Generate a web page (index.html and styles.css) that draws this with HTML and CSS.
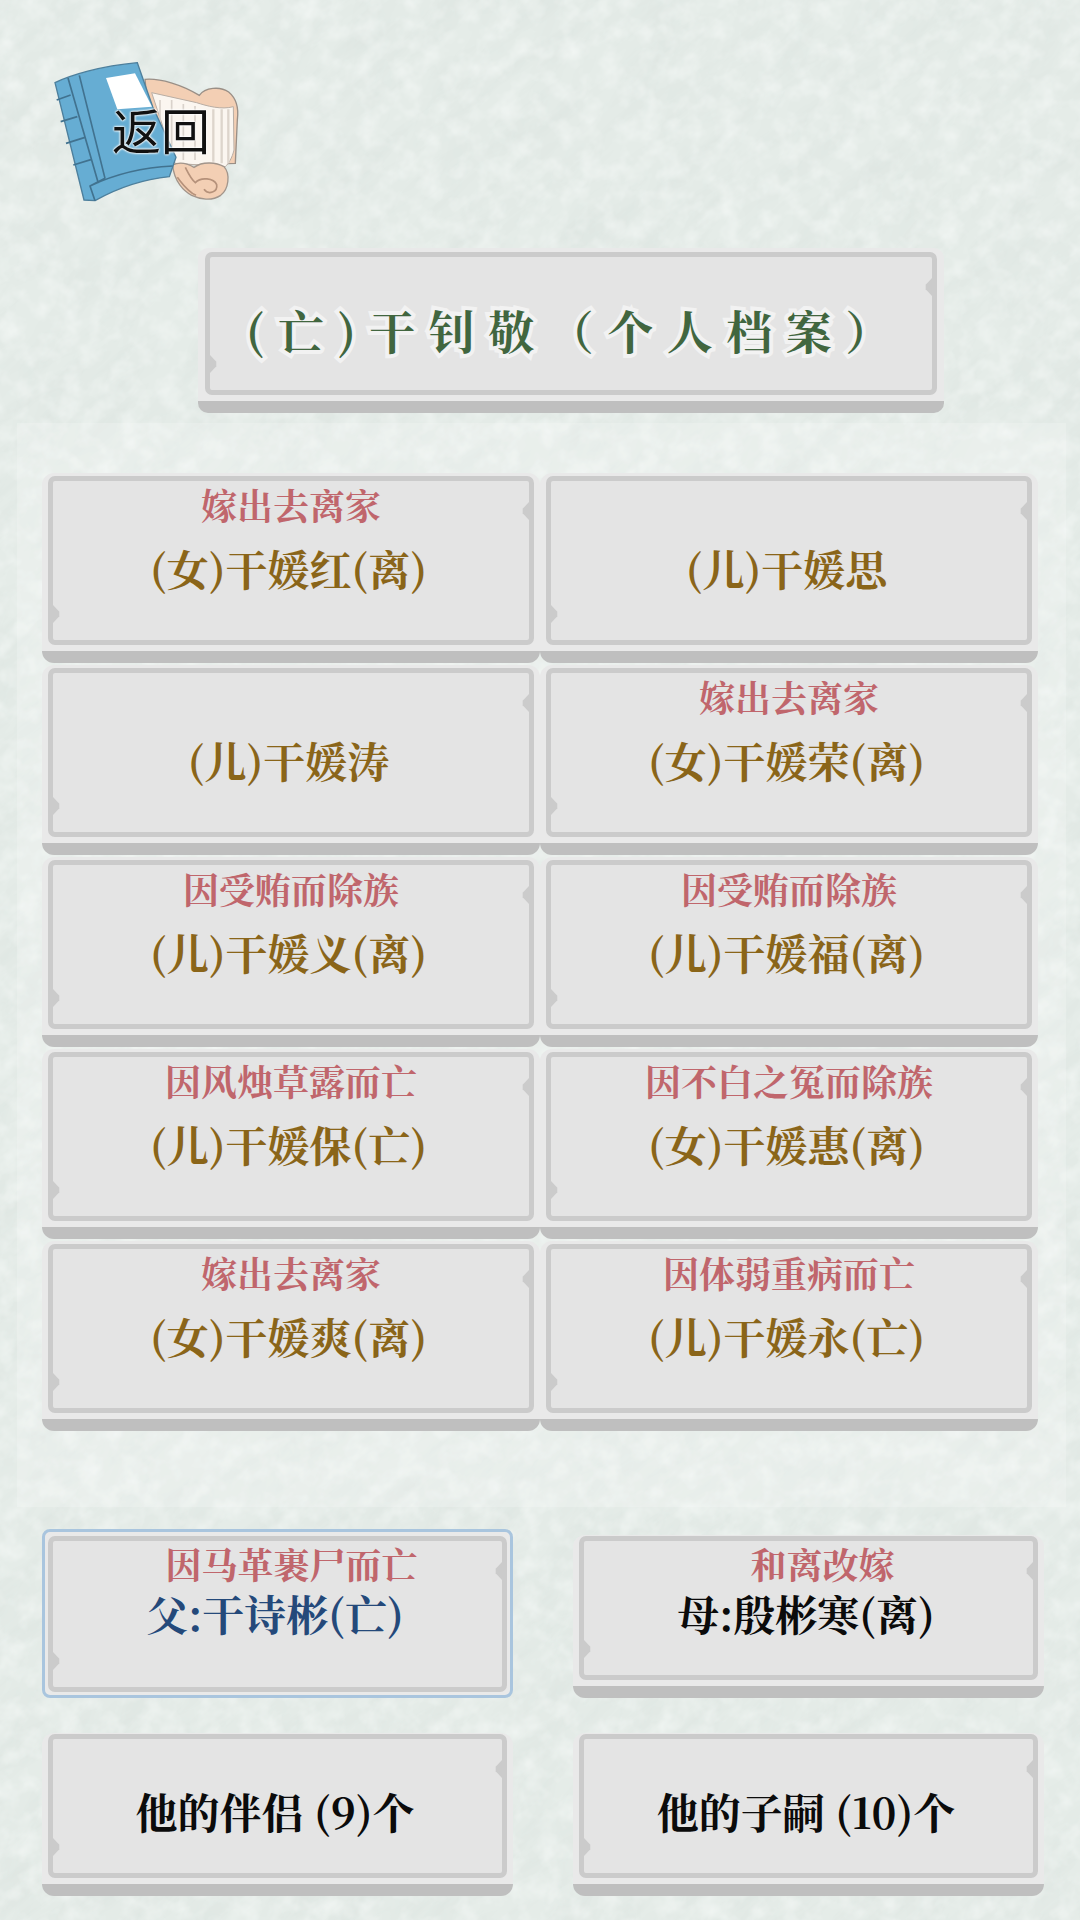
FILE: index.html
```html
<!DOCTYPE html>
<html lang="zh-CN">
<head>
<meta charset="utf-8">
<title>个人档案</title>
<link rel="stylesheet" href="styles.css">
</head>
<body>
<svg class="paper" width="1080" height="1920" aria-hidden="true">
  <defs>
    <filter id="blotch" x="0" y="0" width="100%" height="100%">
      <feTurbulence type="fractalNoise" baseFrequency="0.035 0.012" numOctaves="5" seed="11"/>
      <feColorMatrix type="matrix" values="0 0 0 0 0.72  0 0 0 0 0.78  0 0 0 0 0.75  0.9 0 0 0 -0.36"/>
    </filter>
    <filter id="fiber" x="0" y="0" width="100%" height="100%">
      <feTurbulence type="fractalNoise" baseFrequency="0.012 0.06" numOctaves="4" seed="7"/>
      <feColorMatrix type="matrix" values="0 0 0 0 0.70  0 0 0 0 0.76  0 0 0 0 0.73  0 0.9 0 0 -0.38"/>
    </filter>
    <filter id="light" x="0" y="0" width="100%" height="100%">
      <feTurbulence type="fractalNoise" baseFrequency="0.05" numOctaves="3" seed="4"/>
      <feColorMatrix type="matrix" values="0 0 0 0 0.96  0 0 0 0 0.98  0 0 0 0 0.97  0 1 0 0 -0.42"/>
    </filter>
  </defs>
  <rect width="1080" height="1920" fill="#e5ece8"/>
  <rect x="-700" y="-300" width="2600" height="2600" filter="url(#blotch)" transform="rotate(28 540 960)"/>
  <rect x="-700" y="-300" width="2600" height="2600" filter="url(#fiber)" transform="rotate(-38 540 960)"/>
  <rect width="1080" height="1920" filter="url(#light)"/>
</svg>
<main class="page">
  <a class="back" href="#">
    <svg class="back-art" viewBox="0 0 630 480" width="210" height="160" aria-hidden="true">
      <path d="M315 88C360 84 425 104 478 136C495 112 540 108 566 126C590 146 596 180 592 210L586 340L400 345L320 140Z" fill="#f3cfb4" stroke="#9a8f86" stroke-width="4"/>
      <path d="M335 128L470 158C500 168 545 180 580 170L582 300C576 325 566 340 556 350L405 340Z" fill="#fbf6f0" stroke="#b9aea5" stroke-width="3"/>
      <path d="M520 178V335M545 178V340M565 178V340" stroke="#ddd5cc" stroke-width="7" fill="none"/>
      <path d="M360 150V320M395 150V320M430 162V330M465 168V330" stroke="#d9d2cb" stroke-width="5" fill="none"/>
      <path d="M398 345C425 332 450 345 462 352C490 332 530 338 552 350C572 372 566 418 542 436C515 454 480 448 455 436C432 424 402 395 398 345Z" fill="#f3cfb4" stroke="#a2958b" stroke-width="4"/>
      <path d="M436 352C446 372 452 386 466 398C482 380 522 384 530 404C534 426 505 436 492 418M412 382C428 402 442 424 468 436" fill="none" stroke="#b5917a" stroke-width="5"/>
      <path d="M45 98C90 76 180 48 292 38L338 170L408 322L388 380C310 388 240 410 165 452L132 450Z" fill="#66add3" stroke="#4d7f9c" stroke-width="4"/>
      <path d="M84 84L175 400M118 76L195 385M50 150L92 135M62 215L112 200M78 280L135 262M100 345L155 328M165 452L150 408C230 370 310 352 398 348M150 408L195 385" fill="none" stroke="#41728f" stroke-width="5"/>
      <path d="M198 84L285 70L336 170L232 178Z" fill="#ffffff"/>
    </svg>
    <span class="back-label">返回</span>
  </a>

  <header class="title-card">
    <div class="frame title-frame">
      <h1 class="title">(亡)干钊敬（个人档案）</h1>
    </div>
  </header>

  <section class="family-grid">
    <button class="card"><span class="frame"><span class="note">嫁出去离家</span><span class="name">(女)干媛红(离)</span></span></button>
    <button class="card"><span class="frame"><span class="note"></span><span class="name">(儿)干媛思</span></span></button>
    <button class="card"><span class="frame"><span class="note"></span><span class="name">(儿)干媛涛</span></span></button>
    <button class="card"><span class="frame"><span class="note">嫁出去离家</span><span class="name">(女)干媛荣(离)</span></span></button>
    <button class="card"><span class="frame"><span class="note">因受贿而除族</span><span class="name">(儿)干媛义(离)</span></span></button>
    <button class="card"><span class="frame"><span class="note">因受贿而除族</span><span class="name">(儿)干媛福(离)</span></span></button>
    <button class="card"><span class="frame"><span class="note">因风烛草露而亡</span><span class="name">(儿)干媛保(亡)</span></span></button>
    <button class="card"><span class="frame"><span class="note">因不白之冤而除族</span><span class="name">(女)干媛惠(离)</span></span></button>
    <button class="card"><span class="frame"><span class="note">嫁出去离家</span><span class="name">(女)干媛爽(离)</span></span></button>
    <button class="card"><span class="frame"><span class="note">因体弱重病而亡</span><span class="name">(儿)干媛永(亡)</span></span></button>
  </section>

  <section class="parents-grid">
    <button class="card card-small card-selected"><span class="frame"><span class="note note-tight">因马革裹尸而亡</span><span class="name name-father">父:干诗彬(亡)</span></span></button>
    <button class="card card-small"><span class="frame"><span class="note note-tight">和离改嫁</span><span class="name name-black">母:殷彬寒(离)</span></span></button>
    <button class="card card-small"><span class="frame frame-center"><span class="name name-black">他的伴侣 (9)个</span></span></button>
    <button class="card card-small"><span class="frame frame-center"><span class="name name-black">他的子嗣 (10)个</span></span></button>
  </section>
</main>
</body>
</html>
```
FILE: styles.css
```css
* { box-sizing: border-box; }

html, body {
  margin: 0;
  padding: 0;
  width: 1080px;
  height: 1920px;
  overflow: hidden;
}

body {
  background: #e5ece8;
  font-family: "Noto Serif CJK SC", "Liberation Serif", "Noto Sans CJK SC", serif;
}

.paper {
  position: absolute;
  left: 0;
  top: 0;
  z-index: -1;
}

.page {
  display: flex;
  flex-direction: column;
  padding: 50px 36px 0 42px;
}

.back {
  position: relative;
  display: block;
  width: 210px;
  height: 160px;
  margin: 0 0 38px -2px;
  text-decoration: none;
}

.back-art {
  display: block;
  filter: blur(0.5px);
}

.back-label {
  position: absolute;
  left: 72px;
  top: 53px;
  font: 400 49px/52px "Noto Sans CJK SC", sans-serif;
  color: #111;
  text-shadow: 0 0 2px #fff, 0 0 2px #fff, 0 0 3px #fff;
}

.title-card {
  width: 746px;
  height: 165px;
  margin-left: 156px;
  padding: 4px 7px 0;
  background: #e9e9e9;
  border-radius: 10px;
  border-bottom: 12px solid #bfbfbf;
}

.frame {
  position: relative;
  display: flex;
  flex-direction: column;
  align-items: center;
  height: 100%;
  background: #e4e4e4;
  border: 5px solid #cbcbcb;
  border-radius: 7px;
}

/* Little notches on the frame: upper right and lower left */
.frame::before,
.frame::after {
  content: "";
  position: absolute;
  width: 7px;
  height: 18px;
  background: #cbcbcb;
}
.frame::before {
  right: 0;
  top: 21px;
  clip-path: polygon(100% 0, 10% 38%, 10% 62%, 100% 100%);
}
.frame::after {
  left: 0;
  bottom: 17px;
  clip-path: polygon(0 0, 90% 38%, 90% 62%, 0 100%);
}

.title-frame { height: 143px; align-items: flex-start; }

.title {
  margin: 39px 0 0 36px;
  font-size: 46px;
  line-height: 66px;
  font-weight: 700;
  letter-spacing: 13.5px;
  color: #41663f;
  white-space: nowrap;
  -webkit-text-stroke: 8px #f2f2f2;
  paint-order: stroke fill;
}

.family-grid {
  display: grid;
  grid-template-columns: 498px 498px;
  grid-auto-rows: 192px;
  margin: 10px -22px 0 -25px;
  padding: 50px 22px 74px 25px;
  background: rgba(255, 255, 255, 0.2);
}

.card {
  display: block;
  width: 498px;
  height: 190px;
  margin: 0;
  padding: 3px 6px 6px;
  background: #e9e9e9;
  border: 0;
  border-bottom: 12px solid #bfbfbf;
  border-radius: 12px;
  font: inherit;
  text-align: center;
}

.note {
  display: block;
  height: 44px;
  margin: 2px 0 15px;
  font-size: 36px;
  line-height: 44px;
  font-weight: 700;
  color: #c0666c;
  white-space: nowrap;
}

.name {
  display: block;
  padding-right: 5px;
  font-size: 42px;
  line-height: 52px;
  font-weight: 700;
  color: #8a6519;
  white-space: nowrap;
}

.parents-grid {
  display: grid;
  grid-template-columns: 471px 471px;
  column-gap: 60px;
  row-gap: 35px;
  align-items: end;
  margin-top: 22px;
}

.card-small {
  width: 471px;
  height: 163px;
  padding: 1px 6px 6px;
}

.card-selected {
  height: 169px;
  padding: 4px 3px 3px;
  background: #e9e9e9;
  border: 3px solid #a9c5de;
  border-radius: 8px;
}

.note-tight {
  margin: 1px 0 1px;
  padding-left: 28px;
}
.name-father { color: #24497a; }
.name-black { color: #0b0b0b; }

.frame-center { padding-top: 46px; }
```
